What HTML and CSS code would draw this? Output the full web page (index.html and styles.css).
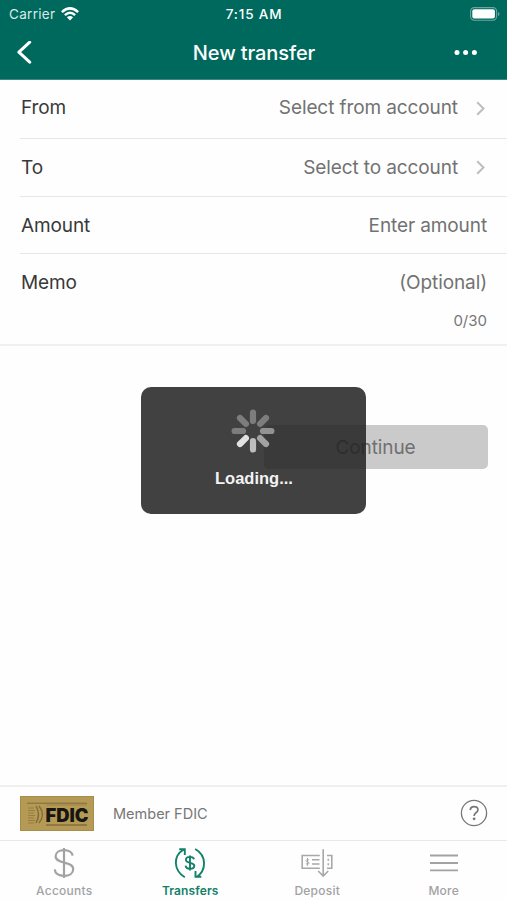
FILE: index.html
```html
<!DOCTYPE html>
<html lang="en">
<head>
<meta charset="utf-8">
<title>New transfer</title>
<link rel="stylesheet" href="styles.css">
</head>
<body>
<div class="screen">
  <header class="header">
    <div class="status">
      <div class="carrier"><span>Carrier</span>
        <svg width="18" height="14" viewBox="0 0 18 14" fill="none" stroke="#fff" stroke-width="2.5"><path d="M.9 5.1Q9-2.4 17.1 5.1M3.9 8.1Q9 3.5 14.1 8.1"/><path d="M9 13.4 5.9 10.2Q9 7.7 12.1 10.2Z" fill="#fff" stroke="none"/></svg>
      </div>
      <time class="clock">7:15 AM</time>
      <svg class="battery" width="30" height="14" viewBox="0 0 30 14"><rect x=".6" y=".6" width="26" height="12.6" rx="3.6" fill="none" stroke="#6da59e" stroke-width="1.1"/><rect x="2.3" y="2.3" width="22.6" height="9.2" rx="2" fill="#fff"/><path d="M28 5v4q1.5-.5 1.5-2T28 5" fill="#6da59e"/></svg>
    </div>
    <nav class="nav">
      <svg width="16" height="24" viewBox="0 0 16 24" fill="none" stroke="#fff" stroke-width="3" stroke-linecap="round" stroke-linejoin="round"><path d="M13.7 1.2 2.9 11.2l10.8 10"/></svg>
      <h1>New transfer</h1>
      <svg width="24" height="6" viewBox="0 0 24 6" fill="#fff"><circle cx="3" cy="2.6" r="2.5"/><circle cx="11.6" cy="2.6" r="2.5"/><circle cx="20.4" cy="2.6" r="2.5"/></svg>
    </nav>
  </header>
  <main class="content">
    <div class="row from"><span class="label">From</span><span class="value">Select from account</span><svg class="chevron" width="9" height="15" viewBox="0 0 9 15"><path d="m1.2 1.2 6.3 6.3-6.3 6.3"/></svg></div>
    <div class="row to"><span class="label">To</span><span class="value">Select to account</span><svg class="chevron" width="9" height="15" viewBox="0 0 9 15"><path d="m1.2 1.2 6.3 6.3-6.3 6.3"/></svg></div>
    <div class="row amount"><span class="label">Amount</span><span class="value">Enter amount</span></div>
    <div class="row memo"><span class="label">Memo</span><span class="value">(Optional)</span></div>
    <div class="count"><span>0/30</span></div>
    <button class="continue">Continue</button>
    <div class="loading" role="status">
      <svg class="spinner" width="44" height="44" viewBox="-22 -22 44 44" stroke-width="6.2" stroke-linecap="round"><g stroke="#7d7d7d"><path d="M0-10v-8.4"/><path d="M7.1-7.1 13-13"/><path d="M-7.1-7.1-13-13"/><path d="M-10 0h-8.4"/></g><path d="M10 0h8.4" stroke="#929292"/><path d="m7.1 7.1 5.9 5.9" stroke="#a2a2a2"/><path d="M0 10v8.4" stroke="#bebebe"/><path d="M-7.1 7.1-13 13" stroke="#e2e2e2"/></svg>
      <span>Loading...</span>
    </div>
  </main>
  <section class="member">
    <svg class="fdic" width="74" height="35" viewBox="0 0 74 35">
      <path fill="#b59a55" d="M0 0h74v35H0z"/><path d="M.5.5h73v34H.5z" fill="none" stroke="#a68d4b"/>
      <path d="M7 7.2h60" stroke="#7d6a3b"/><path d="M26 29h41" stroke="#665733"/><path d="M26 9h41" stroke="#9d8549"/>
      <path d="M8 12h6M8 14.5h7M8 17h6M8 19.5h7M8 22h6M8 24.5h7M8 27h6" stroke="#8d7742" stroke-width=".8"/>
      <path d="M16 10q5 8.5 0 17M19 10q7 8.5 0 17" fill="none" stroke="#806c3b" stroke-width="1.4"/>
      <text x="25.5" y="25.9" textLength="43" lengthAdjust="spacingAndGlyphs">FDIC</text>
    </svg>
    <span>Member FDIC</span>
    <svg class="help" width="28" height="28" viewBox="0 0 28 28" fill="none" stroke="#777" stroke-width="1.3"><circle cx="14" cy="14" r="12.6"/><path d="M10.3 11.1c.1-2.1 1.6-3.4 3.8-3.4 2.3 0 3.8 1.3 3.8 3.2 0 2.8-3.7 2.8-3.7 5.5v.5" stroke-width="1.7"/><circle cx="14.1" cy="19.8" r="1.4" fill="#777" stroke="none"/></svg>
  </section>
  <footer class="tabs">
    <div class="tab"><svg width="32" height="34" viewBox="0 0 32 34" fill="none" stroke="#a2a2a2" stroke-width="2.2"><path d="M16 2v30M24.6 9.7C24.3 6.2 20.7 4.1 16 4.1c-4.8 0-8.4 2.4-8.4 6.2 0 8.4 17.6 4.2 17.6 13 0 4-3.8 6.6-9.2 6.6s-9-2.5-9.2-6.5"/></svg><span>Accounts</span></div>
    <div class="tab active"><svg width="32" height="34" viewBox="0 0 32 34" fill="none" stroke="#128169" stroke-width="1.9"><path d="M10.8 31.3C-1 24.2-.8 9.7 9.5 3.8M5.2 3.3h5.6v5.8M21.2 3c11.9 6.7 11.4 21.9 1 28.2M27.3 30.8h-5.8V25"/><path d="M16 9.5v15M20.1 13.3c-.5-1.7-2-2.4-4.1-2.4-2.4 0-4.1 1.1-4.1 2.9 0 4.1 8.4 2.1 8.4 6 0 1.9-1.7 3-4.2 3-2.6 0-4.3-1.1-4.5-3.1"/></svg><span>Transfers</span></div>
    <div class="tab"><svg width="32" height="34" viewBox="0 0 32 34" fill="none" stroke="#a8a8a8" stroke-width="1.6"><path d="M18.8 9.5H1.2v12.8h17.6M26 9.5h4.8v12.8H26M22.2 3.2v26.3M17.2 25l5 5 5-5M11 13.8h7.5M11 18h7.5M27.3 12.7v2M27.3 17.2v2"/><path d="M6.5 12v7.9M8 14q-3-1-3 .6c0 1.8 3 .8 3 2.7q0 1.5-3.2.5" stroke-width="1"/></svg><span>Deposit</span></div>
    <div class="tab"><svg width="32" height="34" viewBox="0 0 32 34" stroke="#a2a2a2" stroke-width="1.8"><path d="M2 9.5h28M2 17h28M2 24.3h28"/></svg><span>More</span></div>
  </footer>
</div>
</body>
</html>
```
FILE: styles.css
```css
* { box-sizing: border-box; }
body { margin: 0; background: #fefefe; font-family: Inter, "Liberation Sans", sans-serif; }
svg { display: block; flex-shrink: 0; }
.screen { width: 507px; height: 900px; display: flex; flex-direction: column; overflow: hidden; }
.header { height: 80px; background: #00695e; color: #fff; border-bottom: 1px solid #3b8a81; flex-shrink: 0; }
.status { height: 27px; display: grid; grid-template-columns: 1fr auto 1fr; align-items: center; padding: 0 7px 0 9px; }
.carrier { display: flex; align-items: center; gap: 6px; font-size: 13.5px; color: #d8eae7; letter-spacing: .3px; }
.clock { font-size: 13.5px; font-weight: 500; letter-spacing: .85px; transform: translateX(-.5px); }
.battery { justify-self: end; }
.nav { height: 51px; display: grid; grid-template-columns: 1fr auto 1fr; align-items: center; padding: 0 29px 0 16px; }
.nav h1 { margin: 0; font-size: 20px; font-weight: 500; letter-spacing: -.1px; transform: translateX(7px); }
.nav svg:last-child { justify-self: end; }
.content { flex: 1; position: relative; }
.row { display: flex; align-items: center; margin-left: 20px; padding: 0 20px 0 1px; border-bottom: 1px solid #e7e7e7; font-size: 19px; line-height: 24px; letter-spacing: -.1px; }
.label { flex: 1; color: #393939; }
.value { color: #727272; }
.chevron { margin: 2px 2px 0 18px; fill: none; stroke: #bdbdbd; stroke-width: 2; }
.from { height: 59px; padding-bottom: 3px; }
.to { height: 58px; }
.to .chevron { margin-top: 0; }
.amount { height: 57px; padding-top: 2px; }
.memo { height: 58px; border: 0; }
.count { height: 34px; border-bottom: 2px solid #f0f0f0; padding: 0 20px; text-align: right; color: #777; font-size: 15px; line-height: 18px; }
.continue { display: block; width: 224px; height: 44px; margin: 79px 19px 0 auto; padding: 0 1px 0 0; border: 0; border-radius: 5px; background: #cacaca; color: #707070; font: 19px Inter, sans-serif; letter-spacing: -.1px; }
.loading { position: absolute; left: 141px; top: 307px; width: 225px; height: 127px; border-radius: 10px; background: rgba(34, 34, 34, .86); display: flex; flex-direction: column; align-items: center; padding: 22px 0 0 1px; gap: 15px; color: #f3f3f3; font: bold 16.5px/20px "Liberation Sans", sans-serif; }
.spinner { margin-right: 3px; }
.member { height: 56px; border-top: 2px solid #f0f0f0; border-bottom: 1px solid #e8e8e8; display: flex; align-items: center; padding: 0 19px 1px 20px; color: #777; font-size: 14.5px; }
.member > span { flex: 1; margin-left: 19px; }
.fdic text { font: 900 18.5px Inter, sans-serif; fill: #171613; }
.tabs { height: 59px; display: grid; grid-template-columns: repeat(4, 1fr); padding: 5px 0 0 1px; }
.tab { display: flex; flex-direction: column; align-items: center; gap: 3px; color: #a2a2a2; font-size: 12px; font-weight: 500; line-height: 16px; letter-spacing: .25px; }
.active { color: #128169; font-weight: 600; letter-spacing: .1px; padding-right: 1px; }
```
